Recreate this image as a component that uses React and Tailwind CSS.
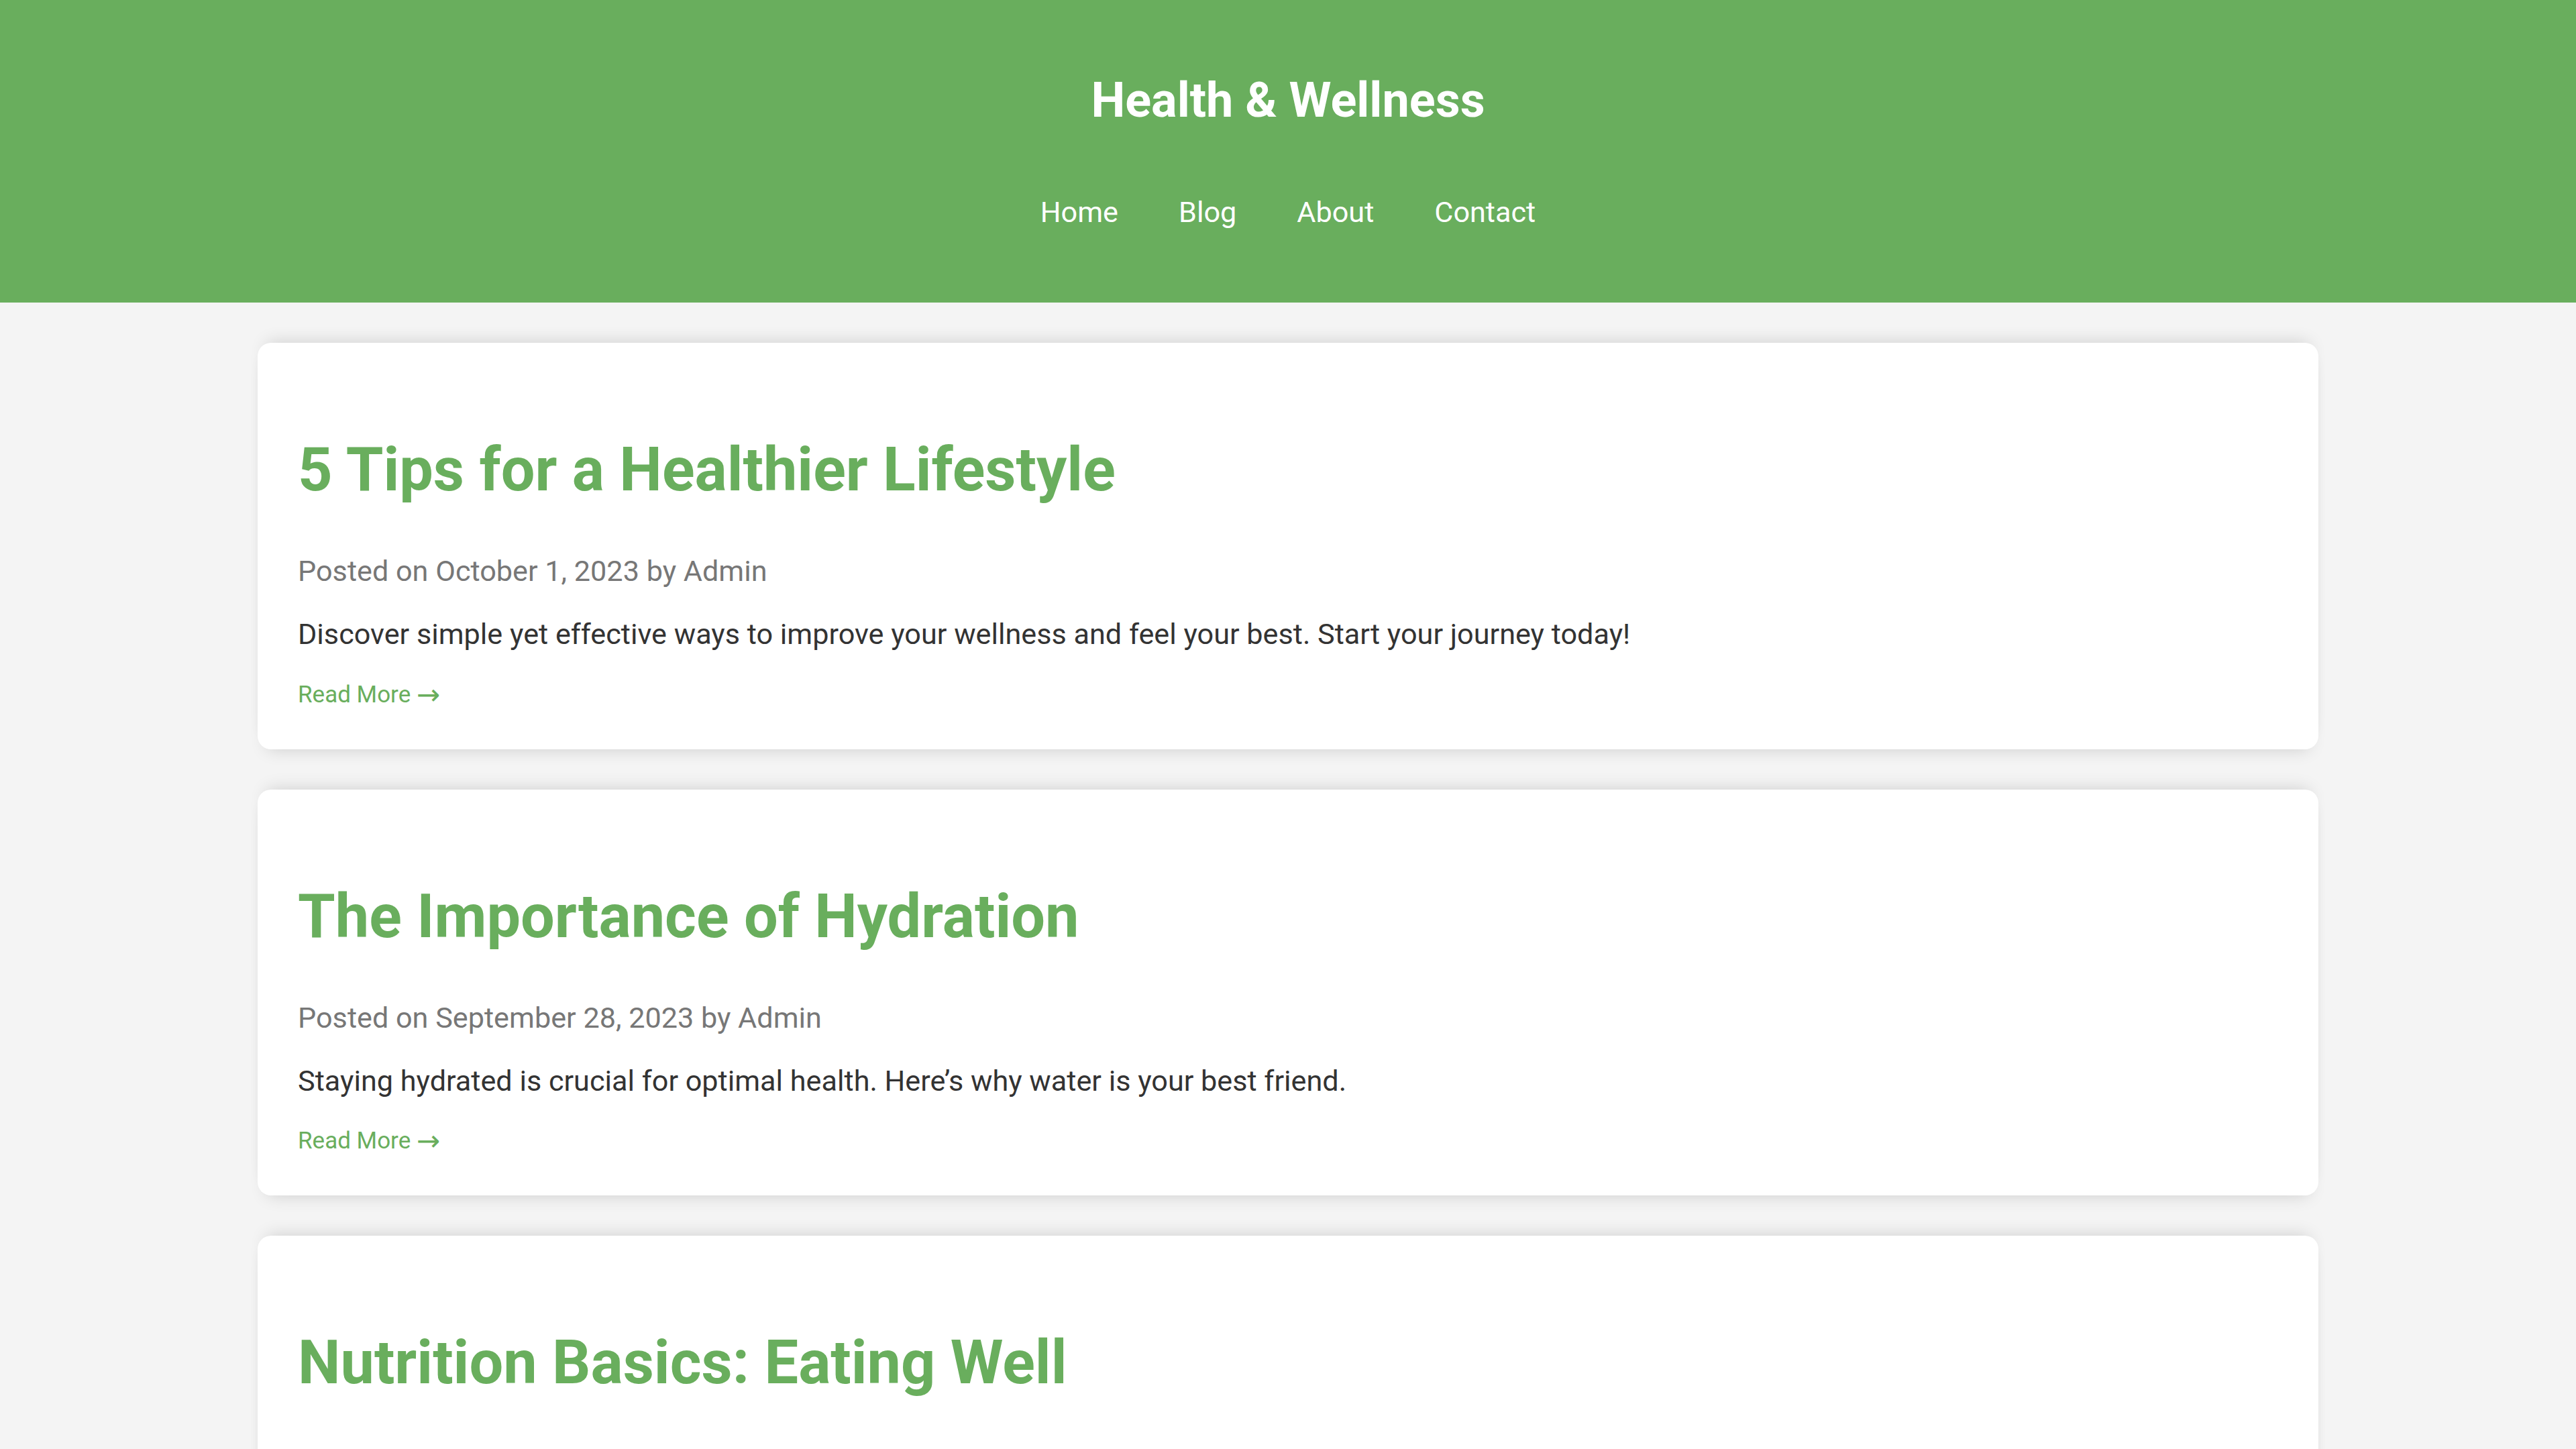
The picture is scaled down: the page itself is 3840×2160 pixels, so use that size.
import React from "react";

const posts = [
  {
    title: "5 Tips for a Healthier Lifestyle",
    date: "October 1, 2023",
    excerpt:
      "Discover simple yet effective ways to improve your wellness and feel your best. Start your journey today!",
  },
  {
    title: "The Importance of Hydration",
    date: "September 28, 2023",
    excerpt:
      "Staying hydrated is crucial for optimal health. Here\u2019s why water is your best friend.",
  },
  {
    title: "Nutrition Basics: Eating Well",
    date: "September 25, 2023",
    excerpt:
      "Learn the fundamentals of a balanced diet and how the food you eat fuels your body.",
  },
];

function PostCard({ title, date, excerpt }) {
  return (
    <article className="bg-white rounded-[20px] px-[60px] pt-[145px] pb-[64px] shadow-[0_-14px_26px_-14px_rgba(0,0,0,0.16),0_14px_26px_-14px_rgba(0,0,0,0.16)]">
      <h2 className="text-[90px] leading-none font-bold text-[#69ae5d]">{title}</h2>
      <p className="mt-[84px] text-[43.2px] leading-none text-[#777777]">
        Posted on {date} by Admin
      </p>
      <p className="mt-[51px] text-[43.2px] leading-none text-[#333333]">{excerpt}</p>
      <a href="#" className="block h-[35px] mt-[50px] text-[35px] leading-none text-[#69ae5d]">
        Read More{" "}
        <span className="relative top-[3px] text-[42px] leading-[0px] font-['DejaVu_Sans',sans-serif]">
          &rarr;
        </span>
      </a>
    </article>
  );
}

export default function App() {
  return (
    <div className="min-h-screen bg-[#f4f4f4] font-['Roboto',sans-serif]">
      {/* header */}
      <header className="bg-[#69ae5d] text-white pt-[114px] pb-[113px] flex flex-col items-center">
        <h1 className="text-[72px] leading-none font-bold">Health &amp; Wellness</h1>
        <nav className="mt-[109px] flex gap-[90px] text-[43.2px] leading-none">
          <a href="#">Home</a>
          <a href="#">Blog</a>
          <a href="#">About</a>
          <a href="#">Contact</a>
        </nav>
      </header>

      {/* posts */}
      <main className="w-[3072px] mx-auto pt-[60px] pb-[60px] flex flex-col gap-[60px]">
        {posts.map((p) => (
          <PostCard key={p.title} {...p} />
        ))}
      </main>
    </div>
  );
}
